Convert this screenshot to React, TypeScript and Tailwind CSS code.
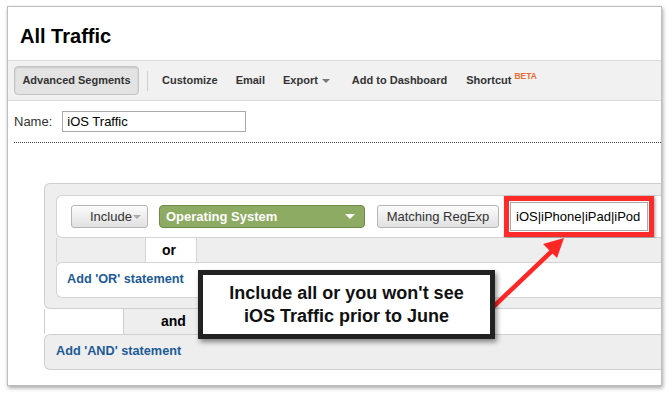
import React from 'react'

function GrayButton({ children, className }: { children: React.ReactNode; className?: string }) {
  return (
    <div
      className={
        'h-[23px] flex items-center border border-[#b5b5b5] rounded-[3px] bg-gradient-to-b from-[#fbfbfb] to-[#e1e1e1] text-[13px] text-[#333] ' +
        (className ?? '')
      }
    >
      {children}
    </div>
  )
}

export default function App() {
  return (
    <div className="relative w-[672px] h-[395px] bg-white overflow-hidden pt-[6px] pl-[7px] font-['Liberation_Sans',Arial,sans-serif]">
      <div className="relative w-[655px] h-[380px] bg-white border border-[#bdbdbd] overflow-hidden shadow-[1px_2px_4px_rgba(0,0,0,0.35)]">
        {/* title */}
        <div className="h-[53px] pt-[17px] pl-[12px] text-[20px] leading-[24px] font-bold text-black">All Traffic</div>

        {/* toolbar */}
        <div className="h-[41px] flex items-center bg-[#f1f1f1] border-y border-[#dadada] text-[11px] font-bold text-[#333]">
          <div className="ml-[6px] w-[125px] h-[29px] flex items-center justify-center rounded-[4px] bg-[#e3e3e3] border border-[#c4c4c4] shadow-[inset_0_1px_2px_rgba(0,0,0,0.12)]">
            Advanced Segments
          </div>
          <div className="ml-[8px] w-px h-[20px] bg-[#cfcfcf]" />
          <span className="ml-[14px]">Customize</span>
          <span className="ml-[18px]">Email</span>
          <span className="ml-[18px]">Export</span>
          <span className="ml-[4px] w-0 h-0 border-x-[4px] border-t-[4px] border-x-transparent border-t-[#777]" />
          <span className="ml-[22px]">Add to Dashboard</span>
          <span className="ml-[19px]">Shortcut</span>
          <span className="ml-[3px] -mt-[9px] text-[8.5px] text-[#ec6b32]">BETA</span>
        </div>

        {/* name */}
        <div className="h-[41px] flex items-center pl-[6px] text-[13px] text-[#333]">
          <span>Name:</span>
          <div className="ml-[10px] w-[184px] h-[21px] flex items-center pl-[4px] border border-[#a9a9a9] text-black">
            iOS Traffic
          </div>
        </div>
        <div className="ml-[6px] border-t border-dotted border-[#444]" />

        {/* segment definition */}
        <div className="mt-[40px] ml-[36px] rounded-l-[6px] border border-r-0 border-[#cfcfcf] bg-[#eeeeee] pt-[11px] pl-[11px] pb-[10px]">
          <div className="h-[43px] flex items-center pl-[14px] bg-white border border-r-0 border-[#d4d4d4] rounded-l-[6px]">
            <GrayButton className="w-[77px] pl-[18px]">
              <span>Include</span>
              <span className="ml-[1px] mt-[1px] w-0 h-0 border-x-[4px] border-t-[4px] border-x-transparent border-t-[#aaa]" />
            </GrayButton>
            <div className="ml-[11px] w-[206px] h-[23px] flex items-center justify-between pl-[6px] pr-[9px] rounded-[4px] bg-[#8dab62] border border-[#6d8c48] text-white text-[13px] font-bold">
              <span>Operating System</span>
              <span className="w-0 h-0 border-x-[5px] border-t-[5px] border-x-transparent border-t-white" />
            </div>
            <GrayButton className="ml-[12px] w-[122px] justify-center">Matching RegExp</GrayButton>
            <div className="ml-[5px] w-[150px] h-[41px] border-[5px] border-[#ff2a2a] p-[1px] bg-white shadow-[1px_1px_3px_rgba(0,0,0,0.4)]">
              <div className="h-full flex items-center pl-[5px] border border-[#aaa] text-[13px] text-black">
                iOS|iPhone|iPad|iPod
              </div>
            </div>
          </div>

          <div className="h-[24px] flex">
            <div className="w-[90px] border-x border-[#d4d4d4] bg-[#eeeeee]" />
            <div className="w-[50px] bg-white flex items-center pl-[16px] text-[14px] font-bold text-black">or</div>
            <div className="flex-1 border-l border-[#d4d4d4] bg-[#eeeeee]" />
          </div>

          <div className="h-[36px] flex items-center pl-[10px] bg-white border border-r-0 border-[#d4d4d4] rounded-l-[6px] text-[12.7px] font-bold text-[#1d5a98]">
            Add 'OR' statement
          </div>
        </div>

        <div className="ml-[36px] h-[25px] flex">
          <div className="w-[80px] border-x border-[#cfcfcf] bg-white" />
          <div className="w-[102px] bg-[#eeeeee] flex items-center pl-[37px] text-[14px] font-bold text-black">and</div>
          <div className="flex-1 border-l border-[#cfcfcf] bg-white" />
        </div>

        <div className="ml-[36px] h-[36px] flex items-center pl-[11px] bg-[#eeeeee] border border-r-0 border-[#cfcfcf] rounded-l-[6px] text-[12.7px] font-bold text-[#1d5a98]">
          Add 'AND' statement
        </div>
      </div>

      {/* arrow */}
      <svg className="absolute left-0 top-0 pointer-events-none" width="672" height="395" viewBox="0 0 672 395">
        <line x1="491" y1="309" x2="552" y2="251" stroke="#ff2626" strokeWidth="4.5" />
        <polygon points="564,238 557,258 543,244" fill="#ff2626" />
      </svg>

      {/* callout */}
      <div className="absolute left-[198px] top-[270px] w-[297px] h-[69px] flex flex-col items-center justify-center bg-white border-[5px] border-[#222] shadow-[2px_3px_5px_rgba(0,0,0,0.45)] text-[18px] leading-[23px] font-bold text-[#111]">
        <span>Include all or you won't see</span>
        <span>iOS Traffic prior to June</span>
      </div>
    </div>
  )
}
